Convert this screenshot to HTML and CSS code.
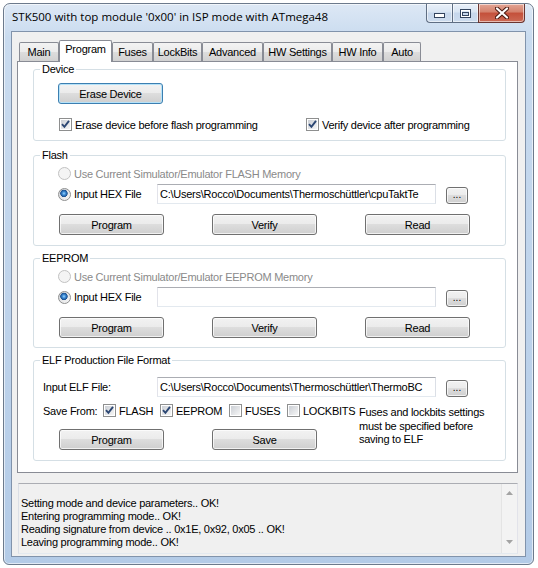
FILE: index.html
```html
<!DOCTYPE html>
<html>
<head>
<meta charset="utf-8">
<title>STK500</title>
<link rel="stylesheet" href="styles.css">
</head>
<body>
<div class="window">
  <div class="titlebar">
    <div class="title">STK500 with top module '0x00' in ISP mode with ATmega48</div>
    <div class="caps">
      <div class="cap cap-min"><svg width="11" height="5" viewBox="0 0 11 5"><rect x="0.5" y="0.5" width="10" height="4" fill="#fff" stroke="#33445e"/></svg></div>
      <div class="cap cap-max"><svg width="11" height="9" viewBox="0 0 11 9"><rect x="0.5" y="0.5" width="10" height="8" fill="none" stroke="#33445e"/><rect x="1.5" y="1.5" width="8" height="6" fill="none" stroke="#fff"/><rect x="2.5" y="3.5" width="6" height="3" fill="none" stroke="#33445e"/></svg></div>
      <div class="cap cap-close"><svg width="14" height="12" viewBox="0 0 14 12"><path d="M2 1.5 L12 10.5 M12 1.5 L2 10.5" stroke="#4a1a10" stroke-width="4.2" stroke-linecap="round"/><path d="M2 1.5 L12 10.5 M12 1.5 L2 10.5" stroke="#fff" stroke-width="2.2" stroke-linecap="round"/></svg></div>
    </div>
  </div>
  <div class="client">
    <div class="tabs">
      <div class="tab w-main">Main</div>
      <div class="tab sel w-prog">Program</div>
      <div class="tab w-fuses">Fuses</div>
      <div class="tab w-lock">LockBits</div>
      <div class="tab w-adv">Advanced</div>
      <div class="tab w-hws">HW Settings</div>
      <div class="tab w-hwi">HW Info</div>
      <div class="tab w-auto">Auto</div>
    </div>
    <div class="panel">
      <div class="group g-device">
        <div class="gt">Device</div>
        <div class="r-erase"><div class="btn btn-default">Erase Device</div></div>
        <div class="r-chk">
          <div class="item c-erase"><span class="chk"><svg width="11" height="11" viewBox="0 0 11 11"><path d="M2 5.2 L4.4 7.8 L9 1.8" fill="none" stroke="#2c4773" stroke-width="1.9"/></svg></span>Erase device before flash programming</div>
          <div class="item"><span class="chk"><svg width="11" height="11" viewBox="0 0 11 11"><path d="M2 5.2 L4.4 7.8 L9 1.8" fill="none" stroke="#2c4773" stroke-width="1.9"/></svg></span>Verify device after programming</div>
        </div>
      </div>

      <div class="group g-flash">
        <div class="gt">Flash</div>
        <div class="r-opt"><span class="radio dis"></span><span class="distext">Use Current Simulator/Emulator FLASH Memory</span></div>
        <div class="r-file">
          <div class="item w-radio"><span class="radio on"></span>Input HEX File</div>
          <div class="tb">C:\Users\Rocco\Documents\Thermoschüttler\cpuTaktTe</div>
          <div class="btn dots">...</div>
        </div>
        <div class="r-btns">
          <div class="btn">Program</div>
          <div class="btn">Verify</div>
          <div class="btn">Read</div>
        </div>
      </div>

      <div class="group g-eeprom">
        <div class="gt">EEPROM</div>
        <div class="r-opt"><span class="radio dis"></span><span class="distext">Use Current Simulator/Emulator EEPROM Memory</span></div>
        <div class="r-file">
          <div class="item w-radio"><span class="radio on"></span>Input HEX File</div>
          <div class="tb"></div>
          <div class="btn dots">...</div>
        </div>
        <div class="r-btns">
          <div class="btn">Program</div>
          <div class="btn">Verify</div>
          <div class="btn">Read</div>
        </div>
      </div>

      <div class="group g-elf">
        <div class="gt">ELF Production File Format</div>
        <div class="r-elf">
          <div class="elf-label">Input ELF File:</div>
          <div class="tb">C:\Users\Rocco\Documents\Thermoschüttler\ThermoBC</div>
          <div class="btn dots">...</div>
        </div>
        <div class="elf-bottom">
          <div class="elf-left">
            <div class="r-save">
              <div class="save-label">Save From:</div>
              <div class="item s-flash"><span class="chk"><svg width="11" height="11" viewBox="0 0 11 11"><path d="M2 5.2 L4.4 7.8 L9 1.8" fill="none" stroke="#2c4773" stroke-width="1.9"/></svg></span>FLASH</div>
              <div class="item s-eeprom"><span class="chk"><svg width="11" height="11" viewBox="0 0 11 11"><path d="M2 5.2 L4.4 7.8 L9 1.8" fill="none" stroke="#2c4773" stroke-width="1.9"/></svg></span>EEPROM</div>
              <div class="item s-fuses"><span class="chk"></span>FUSES</div>
              <div class="item"><span class="chk"></span>LOCKBITS</div>
            </div>
            <div class="r-btns">
              <div class="btn">Program</div>
              <div class="btn">Save</div>
            </div>
          </div>
          <div class="note">Fuses and lockbits settings<br>must be specified before<br>saving to ELF</div>
        </div>
      </div>
    </div>

    <div class="log">
      <div class="log-text">
        <div>Setting mode and device parameters.. OK!</div>
        <div>Entering programming mode.. OK!</div>
        <div>Reading signature from device .. 0x1E, 0x92, 0x05 .. OK!</div>
        <div>Leaving programming mode.. OK!</div>
      </div>
      <div class="scroll">
        <svg width="7" height="4" viewBox="0 0 7 4"><path d="M0 4 L3.5 0 L7 4 Z" fill="#a3a3a3"/></svg>
        <svg width="7" height="4" viewBox="0 0 7 4"><path d="M0 0 L3.5 4 L7 0 Z" fill="#a3a3a3"/></svg>
      </div>
    </div>
  </div>
</div>
</body>
</html>
```

FILE: styles.css
```css
* { box-sizing: border-box; }
html, body { margin: 0; padding: 0; }
body {
  width: 538px;
  height: 568px;
  overflow: hidden;
  background: #ffffff;
  font-family: "Liberation Sans", Arial, sans-serif;
  font-size: 11px;
  letter-spacing: -0.25px;
  color: #000;
}

.window {
  margin: 3px 0 0 3px;
  width: 531px;
  height: 562px;
  border: 1px solid #6c7a8c;
  border-radius: 7px 7px 6px 6px;
  background: linear-gradient(180deg, #dde8f5 0%, #c9dbef 6%, #bed3eb 55%, #b3cbe7 100%);
  box-shadow: inset 0 0 0 1px rgba(255,255,255,0.6);
  padding: 0 7px 7px 7px;
  display: flex;
  flex-direction: column;
}

.titlebar {
  height: 27px;
  display: flex;
  justify-content: space-between;
  align-items: flex-start;
}
.title {
  font-family: "Open Sans", "Noto Sans", sans-serif;
  font-size: 11.5px;
  letter-spacing: 0;
  line-height: 16px;
  margin: 5px 0 0 1px;
  color: #000;
}
.caps {
  display: flex;
  margin-right: 1px;
}
.cap {
  height: 19px;
  display: flex;
  align-items: center;
  justify-content: center;
  border: 1px solid #5f6e83;
  border-top: none;
  box-shadow: inset 0 0 0 1px rgba(255,255,255,0.55);
}
.cap-min {
  width: 26px;
  border-radius: 0 0 0 4px;
  border-right: none;
  background: linear-gradient(180deg, #e9f0f9 0%, #d9e5f3 45%, #c6d7ec 50%, #cddcee 100%);
  padding-top: 5px;
}
.cap-max {
  width: 26px;
  border-right: none;
  background: linear-gradient(180deg, #e9f0f9 0%, #d9e5f3 45%, #c6d7ec 50%, #cddcee 100%);
}
.cap-close {
  width: 47px;
  border-radius: 0 0 4px 0;
  border-color: #6a3530;
  background: linear-gradient(180deg, #e3a595 0%, #d4806b 45%, #c4503a 50%, #cc6a55 100%);
}

.client {
  flex: 1;
  background: #f0f0f0;
  border: 1px solid #8193ab;
  display: flex;
  flex-direction: column;
}

.tabs {
  display: flex;
  align-items: flex-end;
  height: 21px;
  margin: 8px 0 0 7px;
  position: relative;
  z-index: 1;
}
.tab {
  height: 19px;
  border: 1px solid #898c95;
  border-bottom: none;
  border-radius: 2px 2px 0 0;
  background: linear-gradient(180deg, #f3f3f3 0%, #ebebeb 50%, #dddddd 51%, #d1d1d1 100%);
  text-align: center;
  line-height: 18px;
  white-space: nowrap;
  flex-shrink: 0;
}
.tab.sel {
  height: 22px;
  margin-bottom: -1px;
  background: #ffffff;
  line-height: 17px;
}
.w-main { width: 40px; }
.w-prog { width: 53px; }
.w-fuses { width: 41px; }
.w-lock { width: 49px; }
.w-adv { width: 61px; }
.w-hws { width: 69px; }
.w-hwi { width: 51px; }
.w-auto { width: 38px; }

.panel {
  margin-left: 5px;
  width: 501px;
  height: 412px;
  border: 1px solid #898c95;
  background: #ffffff;
  padding-left: 15px;
  overflow: hidden;
}

.group {
  width: 473px;
  border: 1px solid #d5dfe5;
  border-radius: 3px;
}
.gt {
  width: max-content;
  height: 13px;
  line-height: 13px;
  margin: -7px 0 0 6px;
  padding: 0 2px;
  background: #ffffff;
}

.g-device { margin-top: 7px; height: 72px; }
.g-flash { margin-top: 14px; height: 91px; }
.g-eeprom { margin-top: 12px; height: 90px; }
.g-elf { margin-top: 12px; height: 101px; }

.btn {
  display: flex;
  align-items: center;
  justify-content: center;
  width: 105px;
  height: 21px;
  border: 1px solid #707070;
  border-radius: 3px;
  background: linear-gradient(180deg, #f2f2f2 0%, #ebebeb 49%, #dddddd 50%, #cfcfcf 100%);
  box-shadow: inset 0 0 0 1px rgba(255,255,255,0.7);
  white-space: nowrap;
}
.btn-default {
  border-color: #3c7fb1;
  box-shadow: inset 0 0 0 1px #b6e2f8;
}

.r-erase { margin: 7px 0 0 24px; }
.r-chk {
  margin: 13px 0 0 25px;
  height: 15px;
  display: flex;
  align-items: center;
}
.item {
  display: flex;
  align-items: center;
  white-space: nowrap;
}
.c-erase { width: 247px; }

.chk {
  width: 13px;
  height: 13px;
  flex-shrink: 0;
  margin-right: 3px;
  border: 1px solid #8e8f8f;
  padding: 1px;
  background: linear-gradient(135deg, #cbcfd5 0%, #f6f6f6 100%) content-box, #ffffff;
  display: flex;
  align-items: center;
  justify-content: center;
  overflow: visible;
}
.chk svg { margin: -1px; flex-shrink: 0; }

.radio {
  width: 13px;
  height: 13px;
  flex-shrink: 0;
  margin-right: 3px;
  border-radius: 50%;
  border: 1px solid #8e8f8f;
  background: linear-gradient(135deg, #d2d4d8 0%, #f8f8f8 100%);
}
.radio.on {
  background:
    radial-gradient(circle at 45% 40%, #9fd6fb 0, #3f8ed9 1.6px, #1a4f8e 3.4px, rgba(26,79,142,0) 4px),
    linear-gradient(135deg, #d2d4d8 0%, #f8f8f8 100%);
}
.radio.dis {
  border-color: #c2c2c2;
  background: #f4f4f4;
}
.distext { color: #8a8a8a; }

.r-opt {
  margin: 4px 0 0 24px;
  height: 15px;
  display: flex;
  align-items: center;
  white-space: nowrap;
}
.r-file {
  margin: 3px 0 0 24px;
  height: 20px;
  display: flex;
  align-items: center;
}
.w-radio { width: 99px; }

.tb {
  width: 279px;
  height: 20px;
  border: 1px solid;
  border-color: #abadb3 #dbdfe6 #e3e9ef #e2e3ea;
  background: #ffffff;
  padding: 0 2px;
  line-height: 18px;
  overflow: hidden;
  white-space: nowrap;
}
.btn.dots {
  width: 22px;
  height: 17px;
  margin-left: 10px;
  align-self: flex-end;
  font-size: 10px;
  letter-spacing: 0;
  align-items: flex-end;
  line-height: 12px;
  padding-bottom: 2px;
}

.r-btns {
  margin: 10px 0 0 25px;
  display: flex;
  gap: 48px;
}

.r-elf {
  margin: 10px 0 0 9px;
  height: 20px;
  display: flex;
  align-items: center;
}
.elf-label { width: 114px; }
.elf-bottom { display: flex; }
.elf-left { width: 325px; }
.r-save {
  margin: 6px 0 0 9px;
  height: 15px;
  display: flex;
  align-items: center;
  white-space: nowrap;
}
.save-label { width: 60px; }
.s-flash { width: 57px; }
.s-eeprom { width: 69px; }
.s-fuses { width: 58px; }
.g-elf .r-btns { margin-top: 11px; }
.note {
  margin-top: 9px;
  line-height: 13.5px;
  white-space: nowrap;
}

.log {
  margin: 10px 0 0 6px;
  width: 500px;
  height: 71px;
  border: 1px solid;
  border-color: #abadb3 #e2e3ea #e3e9ef #dbdfe6;
  background: #f0f0f0;
  display: flex;
}
.log-text {
  flex: 1;
  padding: 13px 0 0 2px;
  line-height: 13px;
  white-space: nowrap;
  overflow: hidden;
}
.scroll {
  width: 16px;
  border-left: 1px solid #e4e4e4;
  background: #f3f3f3;
  display: flex;
  flex-direction: column;
  align-items: center;
  justify-content: space-between;
  padding: 7px 0 9px;
}
```
